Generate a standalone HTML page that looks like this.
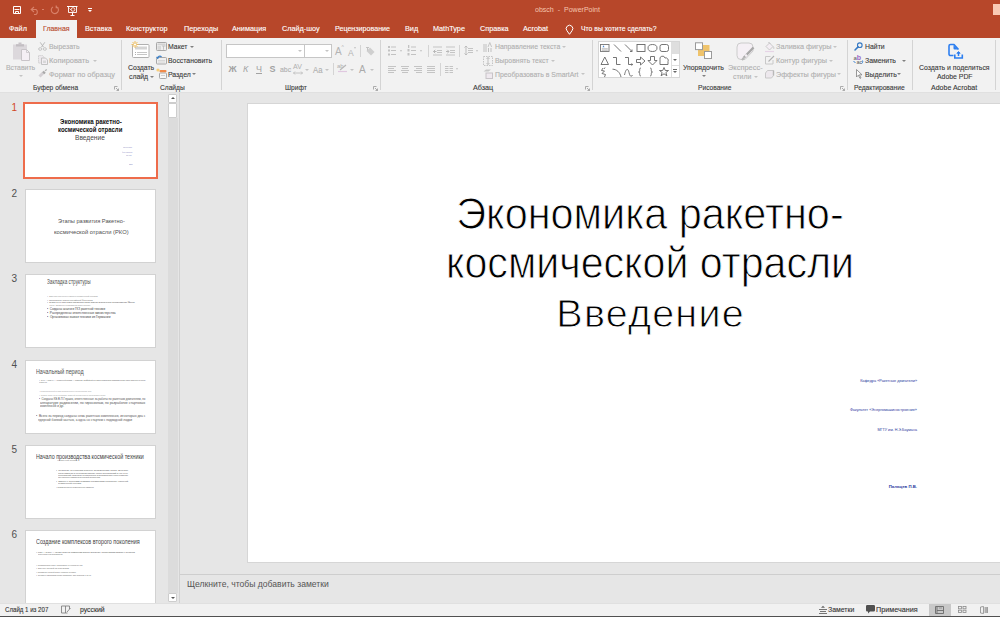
<!DOCTYPE html>
<html><head><meta charset="utf-8">
<style>
*{margin:0;padding:0;box-sizing:border-box}
html,body{width:1000px;height:617px;overflow:hidden;background:#e6e6e6;font-family:"Liberation Sans",sans-serif;position:relative}
.a{position:absolute;white-space:nowrap}
.t{position:absolute;white-space:nowrap;font-size:8px;line-height:10px;transform-origin:0 0;transform:scaleX(.86);-webkit-text-stroke-width:.12px}
#title{left:0;top:0;width:1000px;height:38px;background:#b7472a}
.tab{color:#fff;top:24px;font-size:7.5px!important;transform:scaleX(.97)}
#acttab{left:36px;top:20px;width:41px;height:19px;background:#f2f2f2}
#ribbon{left:0;top:38px;width:1000px;height:55px;background:#f2f2f2;border-bottom:1px solid #e0e0e0}
.dis{color:#b0b0b0}
.en{color:#3a3a3a}
.gl{color:#3a3a3a;top:83px;font-size:8px!important;transform:scaleX(.83)!important}
.sep{position:absolute;width:1px;background:#d4d4d4;top:40px;height:50px}
.dd{position:absolute;width:0;height:0;border-left:2px solid transparent;border-right:2px solid transparent;border-top:2px solid #808080}
.ddd{border-top-color:#c4c4c4}
#pane{left:0;top:93px;width:180px;height:510px;background:#e6e6e6}
.thumb{position:absolute;background:#fff;border:1px solid #d2d2d2;left:25px;width:131px;height:74px;overflow:hidden}
.num{position:absolute;font-size:10px;color:#505050;left:11.5px;line-height:10px}
#slide{left:247px;top:103px;width:760px;height:460px;background:#fff;border:1px solid #d6d6d6}
#notes{left:180px;top:574px;width:820px;height:29px;background:#e6e6e6;border-top:1px solid #cecece}
#status{left:0;top:603px;width:1000px;height:13px;background:#f1f1f1;border-top:1px solid #e0e0e0}
svg{position:absolute;overflow:visible}
</style></head><body>
<!-- TITLE BAR -->
<div class="a" id="title"></div>
<div class="a" style="left:993px;top:4px;width:7px;height:11px;background:#f9cab4"></div>
<div class="t" style="left:535px;top:5px;color:#f4c4ae;transform:scaleX(.88);-webkit-text-stroke-width:0">obsch&nbsp; -&nbsp; PowerPoint</div>
<!-- QAT -->
<svg style="left:12px;top:5px" width="10" height="10" viewBox="0 0 10 10" fill="none" stroke="#fff" stroke-width="1"><path d="M1.5 1.5h7v7h-7z"/><path d="M2.5 4.5h5"/><path d="M3.5 6.5h3v2h-3z"/></svg>
<svg style="left:30px;top:6px" width="10" height="9" viewBox="0 0 10 9"><path d="M1.5 3.5h4.5a3 3 0 0 1 0 5H4 M4 1L1.2 3.5L4 6" fill="none" stroke="#d9826a" stroke-width="1.1"/></svg>
<div class="a" style="left:42px;top:9px;width:2px;height:1px;background:#d9826a"></div>
<svg style="left:50px;top:5px" width="10" height="10" viewBox="0 0 10 10"><path d="M6.5 1.8A3.6 3.6 0 1 1 3 1.9 M6.2 0.5v2.3h2.3" fill="none" stroke="#d9826a" stroke-width="1.1"/></svg>
<svg style="left:67px;top:6px" width="11" height="10" viewBox="0 0 11 10" fill="none" stroke="#fff" stroke-width="1"><path d="M0 0.5h10.5"/><path d="M1.5 0.5v6h8v-6" stroke-width=".9"/><path d="M5.5 6.5v2.5 M3.5 9.5h4"/><circle cx="6" cy="3.5" r="1.8" stroke-width=".8"/><path d="M2.5 2.5l1.5 1.5" stroke-width=".8"/></svg>
<div class="a" style="left:88px;top:8px;width:4px;height:1px;background:#fff"></div>
<div class="dd" style="left:88px;top:10px;border-top:2px solid #fff;border-left-width:2px;border-right-width:2px"></div>

<!-- TABS -->
<div class="a" id="acttab"></div>
<div class="t tab" style="left:9px">Файл</div>
<div class="t tab" style="left:43px;color:#b7472a;transform:scaleX(.93)">Главная</div>
<div class="t tab" style="left:85px">Вставка</div>
<div class="t tab" style="left:126px">Конструктор</div>
<div class="t tab" style="left:184px">Переходы</div>
<div class="t tab" style="left:232px">Анимация</div>
<div class="t tab" style="left:282px">Слайд-шоу</div>
<div class="t tab" style="left:335px;transform:scaleX(.95)">Рецензирование</div>
<div class="t tab" style="left:405px">Вид</div>
<div class="t tab" style="left:433px">MathType</div>
<div class="t tab" style="left:480px">Справка</div>
<div class="t tab" style="left:523px">Acrobat</div>
<svg style="left:565px;top:23.5px" width="9" height="11" viewBox="0 0 9 11"><path d="M1.9 6.6A3.3 3.3 0 1 1 7.1 6.6L4.5 10.3z" fill="none" stroke="#fff" stroke-width="1" stroke-linejoin="round"/></svg>
<div class="t tab" style="left:581px;transform:scaleX(.91)">Что вы хотите сделать?</div>

<!-- RIBBON -->
<div class="a" id="ribbon"></div>

<!-- Clipboard group -->
<svg style="left:12px;top:42px" width="19" height="19" viewBox="0 0 19 19"><rect x="1" y="2.5" width="14" height="15" fill="#dcd8dc"/><rect x="4" y="2.2" width="8" height="2.3" fill="#c2bec2"/><rect x="6.5" y="0.5" width="3" height="2" fill="#c8c4c8"/><path d="M9.5 7.5h5l3 3v8h-8z" fill="#f5eff5" stroke="#c8c4c8" stroke-width="1"/><path d="M14.5 7.5v3h3" fill="none" stroke="#c8c4c8" stroke-width=".8"/></svg>
<div class="t dis" style="left:6px;top:63px">Вставить</div>
<div class="dd ddd" style="left:19px;top:75px"></div>
<svg style="left:38px;top:42px" width="9" height="9" viewBox="0 0 9 9"><path d="M2.2 0.3L5.6 5.2 M6.8 0.3L3.4 5.2" stroke="#b4b4b4" stroke-width=".9" fill="none"/><ellipse cx="2.2" cy="7" rx="1.6" ry="1.3" fill="none" stroke="#c0c0c0" stroke-width=".9"/><ellipse cx="6.8" cy="7" rx="1.6" ry="1.3" fill="none" stroke="#c0c0c0" stroke-width=".9"/></svg>
<div class="t dis" style="left:49px;top:42px">Вырезать</div>
<svg style="left:38px;top:55px" width="10" height="10" viewBox="0 0 10 10"><path d="M0.5 0.5h4l1.5 1.5v6h-5.5z" fill="#ece8ec" stroke="#c8c8c8" stroke-width=".8" stroke-dasharray="1.2 .6"/><path d="M3.5 3h4l2 2v4.5h-6z" fill="#f2eef2" stroke="#bdbdbd" stroke-width=".9"/><rect x="5" y="5.5" width="3" height="2.5" fill="#d8d8d8"/></svg>
<div class="t dis" style="left:49px;top:56px;transform:scaleX(.93)">Копировать</div>
<div class="dd ddd" style="left:93px;top:60px"></div>
<svg style="left:38px;top:69px" width="10" height="9" viewBox="0 0 10 9"><path d="M1.5 7.5L5.5 3.5" stroke="#d4d0d4" stroke-width="3"/><path d="M5 2.5l2 2" stroke="#a8a8a8" stroke-width="2.2"/><path d="M7 1.8l1.8-1.3" stroke="#b0b0b0" stroke-width="1.2"/></svg>
<div class="t dis" style="left:49px;top:70px;transform:scaleX(.92)">Формат по образцу</div>
<div class="t gl" style="left:33px">Буфер обмена</div>
<svg style="left:114px;top:86px" width="5" height="5" viewBox="0 0 5 5"><path d="M0.5 0.5h3 M0.5 0.5v3 M2 2l2.5 2.5 M4.5 2.5v2h-2" stroke="#999" stroke-width=".8" fill="none"/></svg>
<div class="sep" style="left:121px"></div>

<!-- Slides group -->
<svg style="left:131px;top:41px" width="19" height="17" viewBox="0 0 19 17"><rect x="1.5" y="3.5" width="16.5" height="13" rx="1" fill="#fff" stroke="#b0b0b0" stroke-width="1"/><rect x="4" y="5.5" width="12" height="3" fill="#d4d4d4"/><path d="M6 11.5h10 M6 13.5h10" stroke="#b8b8b8" stroke-width=".8"/><path d="M4 11.5h1 M4 13.5h1" stroke="#999" stroke-width=".8"/><g stroke="#eebb55" stroke-width=".9" fill="none"><path d="M4 0v1.5 M4 5.5v1.5 M0.5 3.5h1.5 M6 3.5h1.5 M1.5 1l1 1 M5.5 5l1 1 M6.5 1l-1 1 M2.5 5l-1 1"/><circle cx="4" cy="3.5" r="1.6" fill="#fff"/></g></svg>
<div class="t en" style="left:128px;top:63px">Создать</div>
<div class="t en" style="left:129px;top:72px">слайд</div>
<div class="dd" style="left:150px;top:76px"></div>
<svg style="left:156px;top:42px" width="11" height="9" viewBox="0 0 11 9"><rect x=".5" y=".5" width="10" height="8" rx=".8" fill="#f0f0f0" stroke="#a8a8a8"/><rect x="1.5" y="1.5" width="8" height="1.8" fill="#d2d2d2"/><rect x="1.5" y="4" width="3.5" height="3.8" fill="#d8d8d8"/><path d="M6 4h3.5 M7.5 4v3.8" stroke="#bbb" stroke-width=".8"/></svg>
<div class="t en" style="left:168px;top:42px">Макет</div>
<div class="dd" style="left:190px;top:46px"></div>
<svg style="left:156px;top:55px" width="11" height="10" viewBox="0 0 11 10"><rect x=".5" y="2.5" width="10" height="6.5" rx=".8" fill="#f0f0f0" stroke="#a8a8a8"/><path d="M2 5.5h7 M2 7h7" stroke="#d0d0d0" stroke-width=".8"/><path d="M1.5 3.5A2.3 2.3 0 0 1 5.5 2" stroke="#3d80c8" stroke-width="1.2" fill="none"/><path d="M0 1.8L1.5 4.2L3.4 2.6z" fill="#3d80c8"/></svg>
<div class="t en" style="left:168px;top:56px">Восстановить</div>
<svg style="left:156px;top:68px" width="11" height="11" viewBox="0 0 11 11"><rect x="3.5" y="5" width="7" height="5.5" rx=".8" fill="#f6f6f6" stroke="#a8a8a8"/><path d="M5 7.5h4" stroke="#c8c8c8" stroke-width=".8"/><rect x="3.5" y="2" width="7" height="2.2" rx="1" fill="#f08a4a"/><circle cx="2" cy="2" r="1.6" fill="#f7cf7a"/></svg>
<div class="t en" style="left:168px;top:70px">Раздел</div>
<div class="dd" style="left:192px;top:73px"></div>
<div class="t gl" style="left:160px">Слайды</div>
<div class="sep" style="left:221px"></div>

<!-- Font group -->
<div class="a" style="left:226px;top:44px;width:79px;height:14px;background:#fff;border:1px solid #c6c6c6"></div>
<div class="a" style="left:304px;top:44px;width:28px;height:14px;background:#fff;border:1px solid #c6c6c6"></div>
<div class="dd ddd" style="left:298px;top:50px"></div>
<div class="dd ddd" style="left:325px;top:50px"></div>
<div class="a" style="left:335px;top:46px;font-size:10px;line-height:12px;color:#b4b4b4">A</div>
<div class="a" style="left:341.5px;top:45px;font-size:5px;line-height:5px;color:#b4b4b4">^</div>
<div class="a" style="left:348px;top:47.5px;font-size:8.5px;line-height:10px;color:#b4b4b4">A</div>
<div class="dd ddd" style="left:353.5px;top:47px;border-width:2px 1.5px 0"></div>
<div class="sep" style="left:360px;top:45px;height:12px"></div>
<svg style="left:365px;top:46px" width="10" height="10" viewBox="0 0 10 10"><path d="M1.5 5L5 1.5L9.5 6L6 9.5z" fill="#cfcfcf"/><path d="M1 1.5h3 M2.5 1.5v3" stroke="#bdbdbd" stroke-width=".9"/></svg>
<div class="a" style="left:228.5px;top:64px;font-size:9px;line-height:10px;color:#a2a2a2;font-weight:bold">Ж</div>
<div class="a" style="left:243px;top:64px;font-size:9px;line-height:10px;color:#a2a2a2;font-style:italic">К</div>
<div class="a" style="left:256px;top:64px;font-size:9px;line-height:10px;color:#a2a2a2;text-decoration:underline">Ч</div>
<div class="a" style="left:269.5px;top:64px;font-size:9px;line-height:10px;color:#a2a2a2;font-weight:bold">S</div>
<div class="t dis" style="left:280px;top:65px">abc</div>
<div class="a" style="left:293px;top:63px;font-size:7px;line-height:8px;color:#b0b0b0">AV</div>
<svg style="left:293px;top:70.5px" width="10" height="4" viewBox="0 0 10 4"><path d="M0.5 2h9 M2 0.5L0.5 2L2 3.5 M8 0.5L9.5 2L8 3.5" stroke="#b8b8b8" stroke-width=".8" fill="none"/></svg>
<div class="dd ddd" style="left:305px;top:69px"></div>
<div class="t dis" style="left:313px;top:65px;font-size:9px">Aa</div>
<div class="dd ddd" style="left:325px;top:69px"></div>
<div class="sep" style="left:333px;top:63px;height:12px"></div>
<div class="a" style="left:337px;top:62px;font-size:6px;line-height:8px;color:#b0b0b0">ab</div>
<svg style="left:338px;top:64px" width="9" height="8" viewBox="0 0 9 8"><path d="M2 6L8 1" stroke="#b8b8b8" stroke-width="1.2"/><path d="M0 7.5h9" stroke="#e0c8e0" stroke-width="1.2"/></svg>
<div class="dd ddd" style="left:350px;top:69px"></div>
<div class="a" style="left:359px;top:64px;font-size:10px;line-height:11px;color:#aaaaaa">A</div>
<div class="dd ddd" style="left:370px;top:69px"></div>
<div class="t gl" style="left:285px">Шрифт</div>
<svg style="left:373px;top:86px" width="5" height="5" viewBox="0 0 5 5"><path d="M0.5 0.5h3 M0.5 0.5v3 M2 2l2.5 2.5 M4.5 2.5v2h-2" stroke="#999" stroke-width=".8" fill="none"/></svg>
<div class="sep" style="left:380px"></div>

<!-- Paragraph group -->
<svg style="left:387px;top:46px" width="10" height="10" viewBox="0 0 10 10" fill="#c2c2c2"><rect x="1" y="0" width="2" height="2"/><rect x="1" y="3.5" width="2" height="2"/><rect x="1" y="7.5" width="2" height="2"/><rect x="4" y="0.5" width="5" height="1"/><rect x="4" y="4" width="5" height="1"/><rect x="4" y="8" width="5" height="1"/></svg>
<div class="dd ddd" style="left:400px;top:50px;border-width:2px 1.5px 0"></div>
<svg style="left:407px;top:45px" width="10" height="11" viewBox="0 0 10 11" fill="#c2c2c2"><rect x="1" y="0" width="1.3" height="3"/><rect x="0.5" y="4" width="2" height="2.5"/><rect x="0.5" y="8" width="2" height="2.5"/><rect x="4" y="1.5" width="5" height="1"/><rect x="4" y="5" width="5" height="1"/><rect x="4" y="9" width="5" height="1"/></svg>
<div class="dd ddd" style="left:420px;top:50px;border-width:2px 1.5px 0"></div>
<div class="sep" style="left:428px;top:45px;height:12px"></div>
<svg style="left:433px;top:46px" width="10" height="10" viewBox="0 0 10 10"><g fill="#c4c4c4"><rect x="0" y="0.5" width="9" height="1"/><rect x="4" y="4" width="5" height="1"/><rect x="4" y="6" width="5" height="1"/><rect x="0" y="8.5" width="9" height="1"/></g><path d="M0.5 5.5h3 M2.2 3.8L0.5 5.5L2.2 7.2" stroke="#b8b8b8" stroke-width="1" fill="none"/></svg>
<svg style="left:446px;top:46px" width="10" height="10" viewBox="0 0 10 10"><g fill="#c4c4c4"><rect x="0" y="0.5" width="9" height="1"/><rect x="4" y="4" width="5" height="1"/><rect x="4" y="6" width="5" height="1"/><rect x="0" y="8.5" width="9" height="1"/></g><path d="M0 5.5h3 M1.3 3.8L3 5.5L1.3 7.2" stroke="#b8b8b8" stroke-width="1" fill="none"/></svg>
<div class="sep" style="left:459px;top:45px;height:12px"></div>
<svg style="left:464px;top:45px" width="10" height="11" viewBox="0 0 10 11"><path d="M2 1v9 M0.5 2.5L2 1L3.5 2.5 M0.5 8.5L2 10L3.5 8.5" stroke="#bdbdbd" stroke-width="1" fill="none"/><g fill="#c4c4c4"><rect x="4" y="3" width="5" height="1"/><rect x="4" y="5" width="5" height="1"/><rect x="4" y="7" width="5" height="1"/></g></svg>
<div class="dd ddd" style="left:476px;top:50px;border-width:2px 1.5px 0"></div>
<svg style="left:388px;top:66px" width="48" height="7" viewBox="0 0 48 7" fill="#c4c4c4"><rect x="0" y="0" width="8" height="1"/><rect x="0" y="2" width="6" height="1"/><rect x="0" y="4" width="8" height="1"/><rect x="0" y="6" width="6" height="1"/>
<rect x="13" y="0" width="8" height="1"/><rect x="14" y="2" width="6" height="1"/><rect x="13" y="4" width="8" height="1"/><rect x="14" y="6" width="6" height="1"/>
<rect x="26" y="0" width="8" height="1"/><rect x="28" y="2" width="6" height="1"/><rect x="26" y="4" width="8" height="1"/><rect x="28" y="6" width="6" height="1"/>
<rect x="39" y="0" width="8" height="1"/><rect x="39" y="2" width="8" height="1"/><rect x="39" y="4" width="8" height="1"/><rect x="39" y="6" width="8" height="1"/></svg>
<div class="sep" style="left:440px;top:63px;height:13px"></div>
<svg style="left:445px;top:66px" width="8" height="7" viewBox="0 0 8 7" fill="#c4c4c4"><rect x="0" y="0" width="3.5" height="1"/><rect x="4.5" y="0" width="3.5" height="1"/><rect x="0" y="2" width="3.5" height="1"/><rect x="4.5" y="2" width="3.5" height="1"/><rect x="0" y="4" width="3.5" height="1"/><rect x="4.5" y="4" width="3.5" height="1"/><rect x="0" y="6" width="3.5" height="1"/><rect x="4.5" y="6" width="3.5" height="1"/></svg>
<div class="dd ddd" style="left:456px;top:68px;border-width:2px 1.5px 0"></div>
<svg style="left:483px;top:42px" width="10" height="10" viewBox="0 0 10 10"><path d="M1 2v8 M3 2v8 M5.5 6v4 M8 6v4" stroke="#c0c0c0" stroke-width="1"/><path d="M5 5L6.8 0.5L8.6 5" stroke="#c0c0c0" stroke-width=".9" fill="none"/></svg>
<div class="t dis" style="left:495px;top:42px">Направление текста</div>
<div class="dd ddd" style="left:562px;top:46px"></div>
<svg style="left:483px;top:56px" width="10" height="10" viewBox="0 0 10 10"><rect x=".5" y=".5" width="9" height="9" fill="none" stroke="#c4c4c4" stroke-dasharray="1.5 1"/><path d="M5 1.5v7 M3.5 3L5 1.5L6.5 3 M3.5 7L5 8.5L6.5 7" stroke="#b8b8b8" fill="none" stroke-width=".9"/></svg>
<div class="t dis" style="left:495px;top:56px">Выровнять текст</div>
<div class="dd ddd" style="left:551px;top:60px"></div>
<svg style="left:483px;top:69px" width="10" height="10" viewBox="0 0 10 10"><path d="M0.5 2.5L3 0.5h5l-2.5 2z" fill="#c8c8c8"/><rect x="3" y="4" width="6.5" height="5.5" fill="#efe9ef" stroke="#c8c4c8"/></svg>
<div class="t dis" style="left:495px;top:70px">Преобразовать в SmartArt</div>
<div class="dd ddd" style="left:581px;top:73px"></div>
<div class="t gl" style="left:472.5px;transform:scaleX(.9)!important">Абзац</div>
<svg style="left:585px;top:86px" width="5" height="5" viewBox="0 0 5 5"><path d="M0.5 0.5h3 M0.5 0.5v3 M2 2l2.5 2.5 M4.5 2.5v2h-2" stroke="#999" stroke-width=".8" fill="none"/></svg>
<div class="sep" style="left:592px"></div>

<!-- Drawing group -->
<div class="a" style="left:598px;top:41px;width:82px;height:37px;background:#fff;border:1px solid #d6d6d6"></div>
<div class="a" style="left:671px;top:42px;width:8px;height:12px;background:#dedede"></div>
<div class="a" style="left:671px;top:54px;width:1px;height:23px;background:#dedede"></div>
<div class="a" style="left:671px;top:65px;width:8px;height:1px;background:#dedede"></div>
<div class="dd" style="left:673px;top:59px;border-top-color:#666"></div>
<div class="a" style="left:673px;top:69px;width:4px;height:1px;background:#666"></div>
<div class="dd" style="left:673px;top:71px;border-top-color:#666"></div>
<svg style="left:599px;top:42px" width="72" height="36" viewBox="0 0 72 36" fill="none" stroke="#666" stroke-width=".9">
<rect x="1.5" y="2.5" width="8.5" height="7" fill="#fff" stroke="#777"/><path d="M3.5 5.3l1-2l1 2z" fill="#4a86d0" stroke="none"/><path d="M2.8 6.8h6 M2.8 8.2h6" stroke="#999" stroke-width=".7"/>
<path d="M15 2.5l7 7"/>
<path d="M26 2.5l7 7 M33 7.5v2h-2" />
<rect x="38" y="2.5" width="8" height="7"/>
<ellipse cx="53.5" cy="6" rx="4.5" ry="3.5"/>
<rect x="61" y="2.5" width="8.5" height="7" rx="2"/>
<path d="M2 22.5L5.8 15L9.5 22.5z"/>
<path d="M14 15.5h3.5v7h4"/>
<path d="M26 15.5h3.5v7h4 M32.5 21.5l1.2 1l-1.2 1"/>
<path d="M37.5 17.5h4v-2.5l4.5 4l-4.5 4v-2.5h-4z"/>
<path d="M51.5 14.5h4v4h2.5l-4.5 4.5l-4.5-4.5h2.5z"/>
<path d="M61 22.5v-5a2.5 2.5 0 0 1 5 -1.5a2.5 2.5 0 0 1 3 3.5v3z"/>
<path d="M4 26l-1.5 2.5l3 0.5l-2.5 2.5l3.5 1l-1 2.5 M6 25.5l-1 1.5"/>
<path d="M13.5 27.2c4 0 7.5 3 8.5 7.8"/>
<path d="M25.5 33c1.5-7 3.5-7 4.5-2.5s2.5 4.5 3.5 2.5"/>
<path d="M42 26c-1.3 0-1.3 .8-1.3 2.3s-.3 1.7-1.2 1.7c.9 0 1.2 .4 1.2 1.7s0 2.3 1.3 2.3"/>
<path d="M51 26c1.3 0 1.3 .8 1.3 2.3s.3 1.7 1.2 1.7c-.9 0-1.2 .4-1.2 1.7s0 2.3-1.3 2.3"/>
<path d="M65 25.5l1.3 3h3.2l-2.6 2l1 3.3l-2.9-2l-2.9 2l1-3.3l-2.6-2h3.2z"/>
</svg>
<svg style="left:694px;top:42px" width="19" height="18" viewBox="0 0 19 18"><rect x="4" y="3" width="11.5" height="11" fill="#efc36b"/><rect x="1.5" y="0.8" width="7" height="6.8" fill="#fff" stroke="#9a9a9a"/><rect x="10.5" y="9.5" width="7" height="7" fill="#fff" stroke="#9a9a9a"/></svg>
<div class="t en" style="left:683px;top:63px">Упорядочить</div>
<div class="dd" style="left:702px;top:75px"></div>
<svg style="left:736px;top:42px" width="20" height="19" viewBox="0 0 20 19"><path d="M5 1h8a4 4 0 0 1 4 4v4l-8 8.5H5a4 4 0 0 1-4-4V5a4 4 0 0 1 4-4z" fill="#f5f0f5" stroke="#cccccc"/><path d="M17.5 5.5L8 15.5" stroke="#a8a8a8" stroke-width="2.4"/><path d="M8.5 15L6 18" stroke="#b8b8b8" stroke-width="2"/><circle cx="10" cy="13.5" r="1.3" fill="#f5f0f5"/></svg>
<div class="t dis" style="left:727.5px;top:63px;transform:scaleX(.93)">Экспресс-</div>
<div class="t dis" style="left:733px;top:72px">стили</div>
<div class="dd ddd" style="left:754px;top:76px"></div>
<svg style="left:765px;top:41px" width="10" height="11" viewBox="0 0 10 11"><path d="M1 5.5L4.5 2L8 5.5L4.5 9z" fill="#f4eef4" stroke="#c4c4c4" stroke-width=".9"/><path d="M3.5 1l1.5 1.5" stroke="#b8b8b8"/><path d="M8 5.5c1 .8 1 2 .5 2.5" stroke="#c8c8c8" fill="none"/><path d="M0 10.5h9" stroke="#e6d4e6" stroke-width="1.2"/></svg>
<div class="t dis" style="left:776px;top:42px;transform:scaleX(.91)">Заливка фигуры</div>
<div class="dd ddd" style="left:833px;top:46px"></div>
<svg style="left:765px;top:55px" width="10" height="10" viewBox="0 0 10 10"><path d="M5.5 1.5H0.5v7.5h7.5V5" fill="none" stroke="#c4c4c4" stroke-width=".9"/><path d="M3.5 6.5L9 1" stroke="#b0b0b0" stroke-width="1.1"/></svg>
<div class="t dis" style="left:776px;top:56px;transform:scaleX(.91)">Контур фигуры</div>
<div class="dd ddd" style="left:829px;top:60px"></div>
<svg style="left:765px;top:69px" width="10" height="10" viewBox="0 0 10 10"><path d="M2.5 1.5h6v5l-2 2.5h-6v-5z" fill="#ede8ed" stroke="#c4c4c4" stroke-width=".9"/><path d="M8.5 6.5v-5" stroke="#b8b8b8" stroke-width="1.4"/></svg>
<div class="t dis" style="left:776px;top:70px;transform:scaleX(.9)">Эффекты фигуры</div>
<div class="dd ddd" style="left:837px;top:73px"></div>
<div class="t gl" style="left:698px">Рисование</div>
<svg style="left:840px;top:86px" width="5" height="5" viewBox="0 0 5 5"><path d="M0.5 0.5h3 M0.5 0.5v3 M2 2l2.5 2.5 M4.5 2.5v2h-2" stroke="#999" stroke-width=".8" fill="none"/></svg>
<div class="sep" style="left:847px"></div>

<!-- Editing group -->
<svg style="left:854px;top:42px" width="9" height="9" viewBox="0 0 9 9"><circle cx="5.8" cy="3.2" r="2.3" fill="none" stroke="#3579c4" stroke-width="1.1"/><path d="M4.1 4.9L1 8" stroke="#3579c4" stroke-width="1.5" stroke-linecap="round"/></svg>
<div class="t en" style="left:865px;top:42px">Найти</div>
<svg style="left:853px;top:54px" width="11" height="10" viewBox="0 0 11 10"><text x="0.5" y="5.5" font-family="Liberation Sans" font-size="6" fill="#555">a</text><text x="3.8" y="5.5" font-family="Liberation Sans" font-size="7" fill="#9b6bc8" font-weight="bold">b</text><text x="3.5" y="9.8" font-family="Liberation Sans" font-size="5.5" fill="#555">ac</text><path d="M0.5 7.5l2 1" stroke="#3a82d0" stroke-width="1"/><path d="M9.5 6.5c.5 1 .3 2-.8 2.8" stroke="#3a82d0" stroke-width="1" fill="none"/></svg>
<div class="t en" style="left:865px;top:56px">Заменить</div>
<div class="dd" style="left:902px;top:60px"></div>
<svg style="left:855.5px;top:69px" width="7" height="10" viewBox="0 0 7 10"><path d="M0.5 0.5v7.5l1.8-1.8l1.7 3.2l1-.5l-1.6-3.1h2.6z" fill="#fafafa" stroke="#808080" stroke-width=".8"/></svg>
<div class="t en" style="left:865px;top:70px">Выделить</div>
<div class="dd" style="left:897px;top:73px"></div>
<div class="t gl" style="left:854px">Редактирование</div>
<div class="sep" style="left:912px"></div>

<!-- Acrobat group -->
<svg style="left:947px;top:43px" width="17" height="17" viewBox="0 0 17 17"><path d="M6.5 12.5H3.5a1.5 1.5 0 0 1-1.5-1.5V3a1.5 1.5 0 0 1 1.5-1.5h3.5l4.5 5" fill="none" stroke="#2d7ff0" stroke-width="1.6" stroke-linejoin="round"/><path d="M6.5 2v3.5a1 1 0 0 0 1 1h3.5z" fill="#2d7ff0"/><path d="M7.8 11.5v3.5h7.5v-3.5" fill="none" stroke="#2d7ff0" stroke-width="1.6"/><path d="M11.5 13V9.5" stroke="#2d7ff0" stroke-width="1.5"/><path d="M9.8 10.3l1.7-1.8l1.7 1.8z" fill="#2d7ff0" stroke="#2d7ff0" stroke-width=".8"/></svg>
<div class="t en" style="left:919px;top:63px">Создать и поделиться</div>
<div class="t en" style="left:937px;top:72px">Adobe PDF</div>
<div class="t gl" style="left:931px;transform:scaleX(.88)!important">Adobe Acrobat</div>
<div class="sep" style="left:995px"></div>

<!-- LEFT PANE -->
<div class="a" id="pane"></div>
<div class="a" style="left:168px;top:118px;width:10px;height:475px;background:#dcdcdc"></div>
<div class="a" style="left:179px;top:93px;width:1px;height:510px;background:#d2d2d2"></div>
<div class="a" style="left:168px;top:94px;width:9px;height:9px;background:#fff;border:1px solid #cdcdcd;border-radius:1px"></div>
<div class="dd" style="left:170.5px;top:97px;border-top:none;border-bottom:2px solid #555"></div>
<div class="a" style="left:168px;top:103px;width:9px;height:15px;background:#fff;border:1px solid #cdcdcd;border-radius:1px"></div>
<div class="a" style="left:168px;top:593px;width:9px;height:9px;background:#fff;border:1px solid #cdcdcd;border-radius:1px"></div>
<div class="dd" style="left:170.5px;top:597px;border-top-color:#555"></div>

<div class="thumb" style="left:23px;top:102px;width:135px;height:77px;border:2px solid #ee6c4b"></div>
<div class="thumb" style="top:189px"></div>
<div class="thumb" style="top:274px"></div>
<div class="thumb" style="top:360px"></div>
<div class="thumb" style="top:445px"></div>
<div class="thumb" style="top:530px;height:80px"></div>
<div class="num" style="top:102.5px;color:#d24726">1</div>
<div class="num" style="top:188.5px">2</div>
<div class="num" style="top:273.5px">3</div>
<div class="num" style="top:359.5px">4</div>
<div class="num" style="top:444.5px">5</div>
<div class="num" style="top:529.5px">6</div>
<!-- thumb contents -->
<div class="a" style="left:59.6px;top:118.2px;font-size:7.0px;line-height:8.4px;color:#111;font-weight:bold;white-space:pre;transform-origin:0 0;transform:scaleX(0.889)">Экономика ракетно-</div>
<div class="a" style="left:57.8px;top:125.5px;font-size:7.0px;line-height:8.4px;color:#111;font-weight:bold;white-space:pre;transform-origin:0 0;transform:scaleX(0.858)">космической отрасли</div>
<div class="a" style="left:74.9px;top:133.7px;font-size:6.3px;line-height:7.6px;color:#4a4a4a;white-space:pre;transform-origin:0 0;transform:scaleX(1.045)">Введение</div>
<div class="a" style="left:122.9px;top:147.3px;font-size:1.6px;line-height:2.0px;color:#6a6ab0;white-space:pre;transform-origin:0 0;transform:scaleX(0.381)">Кафедра «Ракетные двигатели»</div>
<div class="a" style="left:121.5px;top:152.2px;font-size:1.6px;line-height:2.0px;color:#6a6ab0;white-space:pre;transform-origin:0 0;transform:scaleX(0.379)">Факультет «Энергомашиностроение»</div>
<div class="a" style="left:126.4px;top:155.0px;font-size:1.6px;line-height:2.0px;color:#6a6ab0;white-space:pre;transform-origin:0 0;transform:scaleX(0.327)">МГТУ им. Н.Э.Баумана</div>
<div class="a" style="left:128.5px;top:163.7px;font-size:1.6px;line-height:2.0px;color:#6a6ab0;font-weight:bold;white-space:pre;transform-origin:0 0;transform:scaleX(0.333)">Пальцев П.В.</div>
<div class="a" style="left:57.5px;top:217.5px;font-size:5.4px;line-height:6.5px;color:#505050;white-space:pre;transform-origin:0 0;transform:scaleX(1.049)">Этапы развития Ракетно-</div>
<div class="a" style="left:53.9px;top:229.1px;font-size:5.4px;line-height:6.5px;color:#505050;white-space:pre;transform-origin:0 0;transform:scaleX(1.075)">космической отрасли (РКО)</div>
<div class="a" style="left:46.8px;top:277.6px;font-size:6.3px;line-height:7.6px;color:#505050;white-space:pre;transform-origin:0 0;transform:scaleX(0.742)">Закладка структуры</div>
<div class="a" style="left:47.4px;top:295.2px;font-size:2.5px;line-height:3.0px;color:#888;white-space:pre;transform-origin:0 0;transform:scaleX(0.843)">•  Загрузка структуры ракетно-космической отрасли</div>
<div class="a" style="left:47.4px;top:298.9px;font-size:2.5px;line-height:3.0px;color:#666;white-space:pre;transform-origin:0 0;transform:scaleX(0.834)">•  Образование Совета Российской Федерации</div>
<div class="a" style="left:47.4px;top:301.3px;font-size:2.5px;line-height:3.0px;color:#444;white-space:pre;transform-origin:0 0;transform:scaleX(0.846)">•  13 мая 1946 года Совет Министров СССР принял историческое постановление №1017</div>
<div class="a" style="left:49.0px;top:303.5px;font-size:2.5px;line-height:3.0px;color:#888;white-space:pre;transform-origin:0 0;transform:scaleX(0.842)">419сс «Вопросы реактивного вооружения»</div>
<div class="a" style="left:47.4px;top:307.0px;font-size:3.3px;line-height:4.0px;color:#444;white-space:pre;transform-origin:0 0;transform:scaleX(0.909)">•  Созданы аналоги ГКЗ ракетной техники</div>
<div class="a" style="left:47.4px;top:310.9px;font-size:3.3px;line-height:4.0px;color:#444;white-space:pre;transform-origin:0 0;transform:scaleX(0.961)">•  Распределены ответственные министерства</div>
<div class="a" style="left:47.4px;top:314.9px;font-size:3.3px;line-height:4.0px;color:#444;white-space:pre;transform-origin:0 0;transform:scaleX(0.968)">•  Организован вывоз техники из Германии</div>
<div class="a" style="left:36.1px;top:367.6px;font-size:7.0px;line-height:8.4px;color:#505050;white-space:pre;transform-origin:0 0;transform:scaleX(0.766)">Начальный период</div>
<div class="a" style="left:38.9px;top:379.5px;font-size:2.4px;line-height:2.9px;color:#555;white-space:pre;transform-origin:0 0;transform:scaleX(0.757)">•  1946 — 1956 гг. — начальный период — освоение трофейной техники и разработка баллистических ракет дальнего и средн</div>
<div class="a" style="left:39.0px;top:381.8px;font-size:2.4px;line-height:2.9px;color:#777;white-space:pre;transform-origin:0 0;transform:scaleX(0.880)">радиуса</div>
<div class="a" style="left:38.9px;top:391.4px;font-size:2.4px;line-height:2.9px;color:#999;white-space:pre;transform-origin:0 0;transform:scaleX(0.659)">•  В области ракетной техники работали крупные конструкторские бюро</div>
<div class="a" style="left:38.9px;top:394.9px;font-size:2.4px;line-height:2.9px;color:#999;white-space:pre;transform-origin:0 0;transform:scaleX(0.813)">•  Создан ОКБ-1 С.П.Королёва, главный конструктор и организатор работ</div>
<div class="a" style="left:38.9px;top:398.1px;font-size:2.9px;line-height:3.5px;color:#555;white-space:pre;transform-origin:0 0;transform:scaleX(0.969)">•  Созданы КБ В.П.Глушко, ответственные за работы по ракетным двигателям, по</div>
<div class="a" style="left:40.0px;top:401.6px;font-size:2.9px;line-height:3.5px;color:#555;white-space:pre;transform-origin:0 0;transform:scaleX(1.193)">аппаратуре радиосвязи, по гироскопам, по разработке стартовых</div>
<div class="a" style="left:40.0px;top:404.9px;font-size:2.9px;line-height:3.5px;color:#555;white-space:pre;transform-origin:0 0;transform:scaleX(1.043)">комплексов и др.</div>
<div class="a" style="left:36.0px;top:414.9px;font-size:2.9px;line-height:3.5px;color:#555;white-space:pre;transform-origin:0 0;transform:scaleX(1.120)">•  Всего за период созданы семь ракетных комплексов, из которых два с</div>
<div class="a" style="left:38.0px;top:418.8px;font-size:2.9px;line-height:3.5px;color:#555;white-space:pre;transform-origin:0 0;transform:scaleX(1.119)">ядерной боевой частью, а одна со стартом с подводной лодки</div>
<div class="a" style="left:36.1px;top:452.9px;font-size:7.0px;line-height:8.4px;color:#404040;white-space:pre;transform-origin:0 0;transform:scaleX(0.765)">Начало производства космической техники</div>
<div class="a" style="left:57.0px;top:459.2px;font-size:1.8px;line-height:2.2px;color:#777;white-space:pre;transform-origin:0 0;transform:scaleX(1.279)">Начальный период</div>
<div class="a" style="left:55.7px;top:469.3px;font-size:2.5px;line-height:3.0px;color:#555;white-space:pre;transform-origin:0 0;transform:scaleX(0.997)">•  Создание технологии полного производства СССР. Вначале</div>
<div class="a" style="left:57.8px;top:471.5px;font-size:2.5px;line-height:3.0px;color:#555;white-space:pre;transform-origin:0 0;transform:scaleX(0.926)">обслуживание и координирование работ предприятий и научных</div>
<div class="a" style="left:57.8px;top:473.8px;font-size:2.5px;line-height:3.0px;color:#555;white-space:pre;transform-origin:0 0;transform:scaleX(0.892)">организаций: принятие и разработка и производство оборудования</div>
<div class="a" style="left:57.8px;top:476.0px;font-size:2.5px;line-height:3.0px;color:#555;white-space:pre;transform-origin:0 0;transform:scaleX(0.731)">для ракетного комплекса передовой электроники</div>
<div class="a" style="left:55.7px;top:480.0px;font-size:2.5px;line-height:3.0px;color:#555;white-space:pre;transform-origin:0 0;transform:scaleX(0.942)">•  Заводы с высокими темпами реализовали разработку ракетной</div>
<div class="a" style="left:57.8px;top:482.2px;font-size:2.5px;line-height:3.0px;color:#555;white-space:pre;transform-origin:0 0;transform:scaleX(0.946)">космической техники</div>
<div class="a" style="left:55.7px;top:485.5px;font-size:2.5px;line-height:3.0px;color:#555;white-space:pre;transform-origin:0 0;transform:scaleX(0.667)">•  Появление военно-промышленного комплекса</div>
<div class="a" style="left:36.0px;top:538.1px;font-size:7.0px;line-height:8.4px;color:#404040;white-space:pre;transform-origin:0 0;transform:scaleX(0.773)">Создание комплексов второго поколения</div>
<div class="a" style="left:36.0px;top:550.7px;font-size:2.5px;line-height:3.0px;color:#444;white-space:pre;transform-origin:0 0;transform:scaleX(0.809)">•  1957 — 1970гг. — начало работ по комплексам второго поколения, обеспечившим паритет с основным</div>
<div class="a" style="left:38.0px;top:553.1px;font-size:2.5px;line-height:3.0px;color:#666;white-space:pre;transform-origin:0 0;transform:scaleX(0.715)">потенциальным противником</div>
<div class="a" style="left:36.0px;top:563.8px;font-size:2.5px;line-height:3.0px;color:#666;white-space:pre;transform-origin:0 0;transform:scaleX(0.771)">•  Производство ракет увеличилось в несколько раз</div>
<div class="a" style="left:36.0px;top:567.0px;font-size:2.5px;line-height:3.0px;color:#666;white-space:pre;transform-origin:0 0;transform:scaleX(0.827)">•  Запущен первый спутник Земли</div>
<div class="a" style="left:36.0px;top:570.9px;font-size:2.5px;line-height:3.0px;color:#666;white-space:pre;transform-origin:0 0;transform:scaleX(0.725)">•  Произведен первый полет человека в космос</div>
<div class="a" style="left:36.0px;top:574.4px;font-size:2.5px;line-height:3.0px;color:#666;white-space:pre;transform-origin:0 0;transform:scaleX(0.826)">•  Созданы автоматические аппараты для полетов к Луне</div>

<!-- MAIN SLIDE -->
<div class="a" id="slide"></div>
<div class="a" style="left:400px;top:192px;width:500px;text-align:center;font-size:44px;line-height:44px;color:#000;-webkit-text-stroke:.9px #fff;transform-origin:50% 0;transform:scaleX(.941)">Экономика ракетно-</div>
<div class="a" style="left:400px;top:241px;width:500px;text-align:center;font-size:44px;line-height:44px;color:#000;-webkit-text-stroke:.9px #fff;transform-origin:50% 0;transform:scaleX(.935)">космической отрасли</div>
<div class="a" style="left:400px;top:293px;width:500px;text-align:center;font-size:39.5px;line-height:40px;color:#000;-webkit-text-stroke:.9px #fff;letter-spacing:1.2px;padding-left:1.2px">Введение</div>
<div class="a" style="left:817px;top:379px;width:100px;text-align:right;font-size:3.8px;line-height:5px;color:#2d3a9e">Кафедра «Ракетные двигатели»</div>
<div class="a" style="left:817px;top:407.5px;width:100px;text-align:right;font-size:3.86px;line-height:5px;color:#2d3a9e">Факультет «Энергомашиностроение»</div>
<div class="a" style="left:817px;top:428px;width:100px;text-align:right;font-size:3.7px;line-height:5px;color:#2d3a9e">МГТУ им. Н.Э.Баумана</div>
<div class="a" style="left:817px;top:484px;width:100px;text-align:right;font-size:4.3px;line-height:5px;color:#2d3a9e;font-weight:bold">Пальцев П.В.</div>
<div class="a" id="notes"></div>
<div class="a" style="left:187px;top:579px;font-size:9px;line-height:11px;color:#555;transform-origin:0 0;transform:scaleX(.954)">Щелкните, чтобы добавить заметки</div>

<!-- STATUS -->
<div class="a" id="status"></div>
<div class="a" style="left:0;top:616px;width:1000px;height:1px;background:#505050"></div>
<div class="t" style="left:5px;top:605px;color:#333;transform:scaleX(.765)">Слайд 1 из 207</div>
<svg style="left:61px;top:605px" width="10" height="9" viewBox="0 0 10 9"><path d="M0.5 1h4v7h-4z M4.5 1h4v3 M4.5 8h2 M6 7l3.5-4" fill="none" stroke="#777" stroke-width=".8"/></svg>
<div class="t" style="left:80px;top:605px;color:#333">русский</div>
<svg style="left:818.5px;top:605px" width="8" height="9" viewBox="0 0 8 9"><path d="M2 2.8L4 .8L6 2.8z" fill="#666"/><path d="M0 4.5h8 M1 6.5h6 M0 8.5h8" stroke="#666" stroke-width=".9" fill="none"/></svg>
<div class="t" style="left:828px;top:605px;color:#333">Заметки</div>
<svg style="left:866px;top:605px" width="9" height="9" viewBox="0 0 9 9"><path d="M1.2 0h6.6a1.2 1.2 0 0 1 1.2 1.2v4.1a1.2 1.2 0 0 1-1.2 1.2H4l-2 2v-2h-.8A1.2 1.2 0 0 1 0 5.3V1.2A1.2 1.2 0 0 1 1.2 0z" fill="#505050"/></svg>
<div class="t" style="left:876px;top:605px;color:#333;transform:scaleX(.9)">Примечания</div>
<div class="a" style="left:929px;top:604px;width:22px;height:12px;background:#c8c8c8"></div>
<svg style="left:935px;top:606px" width="9" height="8" viewBox="0 0 9 8"><path d="M0.5 0.5h8v7h-8z M2 0.5v7 M2 4.5h6.5" fill="none" stroke="#6a6a6a" stroke-width=".9"/><path d="M4 2h3" stroke="#888" stroke-width=".8"/></svg>
<svg style="left:958px;top:606px" width="9" height="7" viewBox="0 0 9 7"><g fill="none" stroke="#8a8a8a" stroke-width=".8"><rect x=".5" y=".5" width="3" height="2.3"/><rect x="5" y=".5" width="3" height="2.3"/><rect x=".5" y="4.2" width="3" height="2.3"/><rect x="5" y="4.2" width="3" height="2.3"/></g></svg>
<svg style="left:980px;top:605.5px" width="8" height="8" viewBox="0 0 8 8"><path d="M.5 1v6 M3.5 .5v7 M7.5 1v6 M.5 1l3-.5 M.5 7l3 .5" fill="none" stroke="#8a8a8a" stroke-width=".8"/><rect x="4.5" y="1" width="2.5" height="6" fill="#b0b0b0"/></svg>
</body></html>
